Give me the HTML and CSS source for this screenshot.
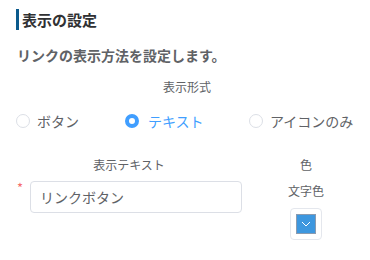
FILE: index.html
```html
<!DOCTYPE html>
<html lang="ja">
<head>
<meta charset="utf-8">
<link rel="stylesheet" href="styles.css">
</head>
<body>
<div class="page">
  <h2 class="title">表示の設定</h2>
  <p class="desc">リンクの表示方法を設定します。</p>
  <div class="field-label center">表示形式</div>
  <div class="radios">
    <label class="radio"><span class="dot"></span><span>ボタン</span></label>
    <label class="radio checked"><span class="dot"></span><span>テキスト</span></label>
    <label class="radio"><span class="dot"></span><span>アイコンのみ</span></label>
  </div>
  <div class="row">
    <div class="col-text">
      <div class="field-label">表示テキスト</div>
      <div class="input-line">
        <span class="req">*</span>
        <div class="input">リンクボタン</div>
      </div>
    </div>
    <div class="col-color">
      <div class="field-label">色</div>
      <div class="sub-label">文字色</div>
      <div class="picker"><div class="swatch"><svg width="10" height="6" viewBox="0 0 10 6"><path d="M1 1l4 4 4-4" fill="none" stroke="#fff" stroke-width="1"/></svg></div></div>
    </div>
  </div>
</div>
</body>
</html>
```
FILE: styles.css
```css
* { box-sizing: border-box; }
html, body { margin: 0; padding: 0; background: #fff; }
body { font-family: "Noto Sans CJK JP", "Noto Sans", sans-serif; color: #606266; width: 370px; height: 260px; overflow: hidden; }
.page { padding: 9px 16px 0 16px; }
.title { margin: 0; font-size: 15px; font-weight: bold; color: #303133; border-left: 3px solid #0b5a8c; padding-left: 3px; line-height: 21px; }
.desc { margin: 15px 0 0 1px; font-size: 14px; font-weight: bold; color: #606266; line-height: 20px; }
.field-label { font-size: 12px; color: #606266; line-height: 18px; text-align: center; }
.center { margin-top: 13px; padding-left: 4px; }
.radios { display: flex; margin-top: 15px; height: 20px; align-items: center; }
.radio { display: flex; align-items: center; gap: 7px; font-size: 14px; color: #606266; }
.radio:nth-child(1) { width: 109px; }
.radio:nth-child(2) { width: 124px; }
.radio.checked { color: #409eff; gap: 9px; }
.dot { width: 14px; height: 14px; border: 1px solid #dcdfe6; border-radius: 50%; display: inline-block; }
.checked .dot { border: 4px solid #409eff; background: #fff; }
.row { display: grid; grid-template-columns: 226px 128px; margin-top: 25px; }
.input-line { display: flex; margin-top: 7px; }
.req { color: #f56c6c; font-size: 13px; width: 14px; line-height: 14px; padding-left: 1px; }
.input { width: 212px; height: 32px; border: 1px solid #dcdfe6; border-radius: 4px; font-size: 14px; line-height: 30px; padding-left: 9px; color: #606266; }
.col-color { display: flex; flex-direction: column; align-items: center; }
.sub-label { font-size: 12px; line-height: 18px; margin-top: 8px; }
.picker { margin-top: 8px; width: 32px; height: 32px; border: 1px solid #e4e7ed; border-radius: 4px; padding: 5px; }
.swatch { width: 20px; height: 20px; background: #3d97df; border: 1px solid #8a9bb0; display: flex; align-items: center; justify-content: center; }
```
